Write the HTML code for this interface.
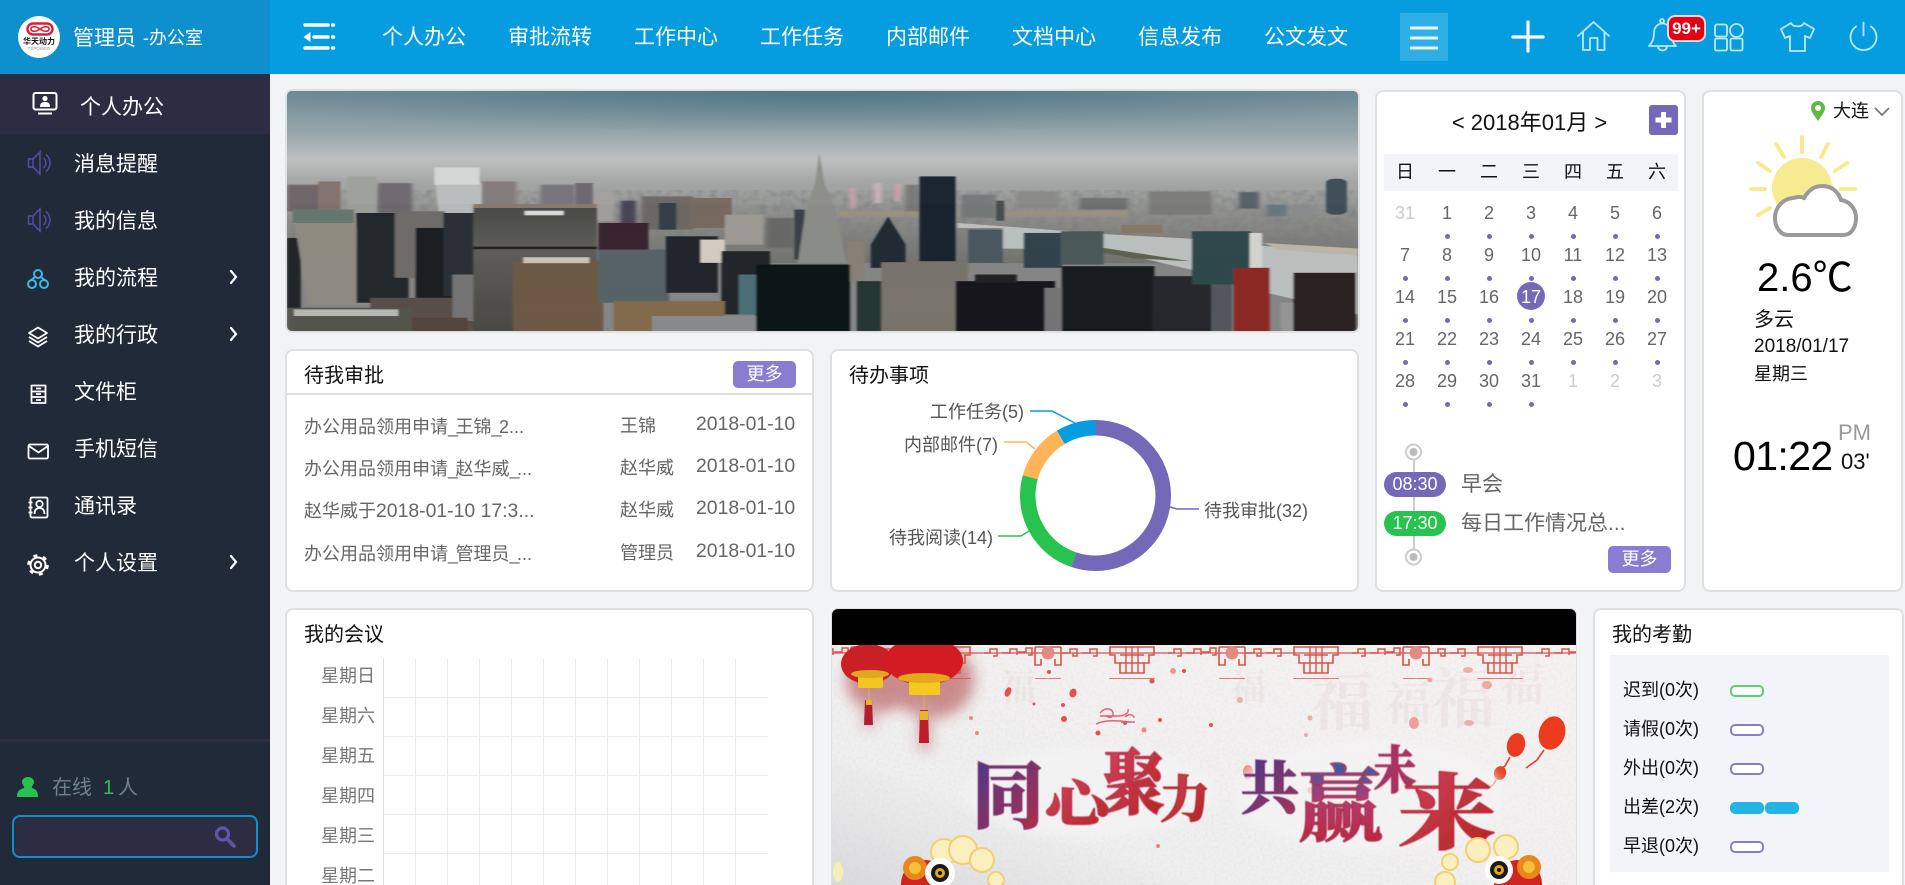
<!DOCTYPE html>
<html lang="zh-CN"><head><meta charset="utf-8"><title>OA</title>
<style>
*{box-sizing:border-box;margin:0;padding:0}
html,body{width:1905px;height:885px;overflow:hidden;background:#f2f3f5;font-family:"Liberation Sans","Noto Sans CJK SC",sans-serif}
#root{position:absolute;left:0;top:0;width:1905px;height:885px;overflow:hidden;background:#f2f3f5}
.a{position:absolute}
.t{position:absolute;white-space:nowrap;line-height:1}
.card{position:absolute;background:#fff;border:2px solid #dedfe1;border-radius:8px}
.w{color:#fff}
.n{letter-spacing:-2.5px}
.more{position:absolute;width:63px;height:27px;background:#8a7dd1;border-radius:5px;color:#fff;font-size:18px;line-height:27px;text-align:center}
.grid{position:absolute;left:1384px;display:grid;grid-template-columns:repeat(7,42px)}
.cal{top:191px;grid-auto-rows:42px;color:#666;font-size:18px;text-align:center;line-height:44px}
.cal span{position:relative;display:block}
.cal .m{color:#ccc}
.cal .d::after{content:"";position:absolute;left:18.5px;top:42.5px;width:5px;height:5px;border-radius:50%;background:#7468b8}
.cal .c{color:#fff}
.cal .c::before{content:"";position:absolute;left:7px;top:7px;width:28px;height:28px;border-radius:50%;background:#7468b8;z-index:-1}
.wk{top:154px;height:37px;background:#f3f3fa;line-height:37px;font-size:18px;text-align:center;color:#111;width:294px}
.pill{position:absolute;left:1384px;width:62px;height:25px;border-radius:13px;color:#fff;font-size:18px;line-height:25px;text-align:center}
.bar{position:absolute;width:34px;height:12px;border-radius:5px;border:2px solid #8a7dc8;background:#fff}
.l{position:absolute;left:1623px;font-size:18px;line-height:1;color:#111;white-space:nowrap}
.r{font-size:18px;color:#666}
.u{font-size:18px;color:#666}
.dt{font-size:19.4px;color:#666}
</style></head><body>
<div id="root">

<div class="a" style="left:0;top:0;width:270px;height:74px;background:#0e90cf"></div>
<div class="a" style="left:270px;top:0;width:1635px;height:74px;background:#069de0"></div>
<div class="a" style="left:0;top:74px;width:270px;height:811px;background:#202a38"></div>
<div class="a" style="left:0;top:74px;width:270px;height:60px;background:#2c2d42"></div>
<div class="a" style="left:0;top:739px;width:270px;height:3px;background:#2c2d42"></div>
<div class="a" style="left:12px;top:815px;width:246px;height:43px;background:#2c2d42;border:2px solid #0e90cf;border-radius:8px"></div>
<div class="a" style="left:1400px;top:13px;width:48px;height:48px;background:#30aee6"></div>

<!-- banner -->
<div class="a" style="left:285px;top:89px;width:1075px;height:244px;border:2px solid #dfe1e3;border-radius:7px;overflow:hidden;background:#888">
<svg width="1071" height="240" viewBox="10 18 1541 722" preserveAspectRatio="none" style="display:block">
<defs>
<linearGradient id="sky" x1="0" y1="0" x2="0" y2="1"><stop offset="0" stop-color="#748d99"/><stop offset=".55" stop-color="#93a3a9"/><stop offset="1" stop-color="#bfc3c3"/></linearGradient>
<radialGradient id="sk2" cx=".5" cy="0" r=".6"><stop offset="0" stop-color="#3f6a7c" stop-opacity=".65"/><stop offset="1" stop-color="#3f6a7c" stop-opacity="0"/></radialGradient>
<linearGradient id="cty" x1="0" y1="0" x2="0" y2="1"><stop offset="0" stop-color="#bcbfbf"/><stop offset=".2" stop-color="#a5a8a6"/><stop offset=".6" stop-color="#8e8f8b"/><stop offset="1" stop-color="#74756f"/></linearGradient>
<filter id="nz" x="0" y="0" width="100%" height="100%"><feTurbulence type="fractalNoise" baseFrequency=".1 .05" numOctaves="3" seed="4"/><feColorMatrix values="0 0 0 0 .2 0 0 0 0 .2 0 0 0 0 .22 0 0 0 1.3 -.5"/><feGaussianBlur stdDeviation="1.6 1"/></filter>
<filter id="bl"><feGaussianBlur stdDeviation="1.4 .6"/></filter>
<filter id="bl2"><feGaussianBlur stdDeviation="3 1.5"/></filter>
<linearGradient id="stripe" x1="0" y1="0" x2="0" y2="1"><stop offset="0" stop-color="#4a4a48"/><stop offset=".35" stop-color="#61605a"/><stop offset="1" stop-color="#4b4a46"/></linearGradient>
<pattern id="win" width="9" height="6" patternUnits="userSpaceOnUse"><rect width="9" height="2.500" fill="#000"/></pattern>
<linearGradient id="fade" x1="0" y1="0" x2="0" y2="1"><stop offset="0" stop-color="#000" stop-opacity="0"/><stop offset="1" stop-color="#000" stop-opacity="1"/></linearGradient>
<mask id="nm"><rect x="10" y="226" width="1541" height="90" fill="url(#fade)"/><rect x="10" y="316" width="1541" height="230" fill="#fff"/></mask>
</defs>
<rect x="10" y="18" width="1541" height="212" fill="url(#sky)"/>
<rect x="10" y="18" width="1541" height="212" fill="url(#sk2)"/>
<rect x="10" y="226" width="1541" height="310" fill="url(#cty)"/>
<g mask="url(#nm)"><rect x="10" y="236" width="1541" height="300" filter="url(#nz)"/></g>
<g filter="url(#bl2)">
<rect x="800" y="378" width="420" height="18" fill="#9c9484"/>
<rect x="1380" y="322" width="28" height="50" fill="#59636a"/><rect x="1420" y="360" width="28" height="35" fill="#6b7a82"/><rect x="1455" y="360" width="30" height="40" fill="#8c8e90"/>
<rect x="855" y="295" width="10" height="60" fill="#c8b4bc"/><rect x="885" y="295" width="8" height="55" fill="#c8a4ac"/><rect x="820" y="310" width="8" height="60" fill="#c8a4ac"/>
<rect x="10" y="300" width="50" height="80" fill="#6e6668"/>
<rect x="140" y="295" width="50" height="90" fill="#6e6a70"/>
<rect x="290" y="290" width="50" height="70" fill="#847c7c"/>
<rect x="375" y="300" width="50" height="60" fill="#77767a"/>
<rect x="450" y="320" width="30" height="90" fill="#a4a2a0"/>
<rect x="490" y="348" width="22" height="70" fill="#4a4652"/>
<rect x="520" y="335" width="75" height="100" fill="#6e6a68"/>
<rect x="700" y="400" width="40" height="90" fill="#6a6a68"/>
<rect x="900" y="300" width="20" height="80" fill="#7a7a78"/><rect x="980" y="330" width="50" height="70" fill="#777a7a"/><rect x="1060" y="320" width="60" height="50" fill="#8a8a88"/><rect x="1150" y="340" width="70" height="35" fill="#6f7272"/><rect x="1250" y="320" width="90" height="70" fill="#7d7d7b"/>
</g>
<g filter="url(#bl)">
<polygon points="975,415 1060,428 1200,450 1310,462 1551,512 1551,690 1420,625 1310,555 1185,495 1040,492 1040,430 975,430" fill="#bfc4c2"/>
<polygon points="1185,490 1310,530 1230,522 1185,505" fill="#5f6450"/>
<polygon points="1415,475 1551,492 1551,512 1440,497" fill="#c0b8aa"/>
<rect x="1030" y="348" width="12" height="60" fill="#4a4f50"/>
<rect x="1210" y="420" width="60" height="25" fill="#8a7a6a"/>
<rect x="97" y="275" width="42" height="110" fill="#9ea19c"/>
<polygon points="222,248 278,248 290,300 290,385 228,385" fill="#b9bdbd"/>
<rect x="222" y="248" width="65" height="52" fill="#d4d6d5"/>
<rect x="55" y="290" width="32" height="90" fill="#84736e"/>
<rect x="425" y="295" width="25" height="70" fill="#6f6a70"/>
<rect x="10" y="460" width="20" height="280" fill="#22262a"/>
<polygon points="18,375 105,375 130,660 40,660" fill="#918e84"/>
<rect x="18" y="375" width="88" height="40" fill="#667a70"/>
<rect x="110" y="385" width="75" height="270" fill="#24292e"/>
<rect x="165" y="380" width="72" height="200" fill="#716e6b"/>
<rect x="195" y="430" width="60" height="260" fill="#1c2024"/>
<rect x="235" y="385" width="45" height="250" fill="#2b3138"/>
<rect x="130" y="640" width="150" height="100" fill="#5a5148"/>
<rect x="248" y="570" width="35" height="140" fill="#777"/>
<rect x="278" y="360" width="178" height="380" fill="url(#stripe)"/>
<rect x="278" y="486" width="178" height="8" fill="#26251f"/>
<rect x="278" y="358" width="178" height="12" fill="#8a7d70"/>
<rect x="352" y="378" width="56" height="14" fill="#ddd"/>
<rect x="335" y="530" width="130" height="210" fill="#6f5b46"/>
<rect x="350" y="518" width="95" height="18" fill="#cfc6bc"/>
<rect x="458" y="415" width="72" height="85" fill="#3a2530"/>
<rect x="458" y="495" width="102" height="160" fill="#59656a"/>
<rect x="545" y="355" width="25" height="80" fill="#36404a"/>
<rect x="590" y="340" width="60" height="90" fill="#786c62"/>
<rect x="555" y="455" width="75" height="170" fill="#22282e"/>
<rect x="605" y="465" width="35" height="70" fill="#d8d0c4"/>
<rect x="640" y="390" width="55" height="90" fill="#a09d97"/>
<rect x="635" y="500" width="70" height="190" fill="#22272c"/>
<rect x="660" y="570" width="30" height="120" fill="#50707a"/>
<rect x="480" y="650" width="160" height="90" fill="#856d4f"/>
<rect x="10" y="670" width="180" height="70" fill="#55564f"/>
<rect x="20" y="675" width="150" height="20" fill="#bdbcb6"/>
<rect x="190" y="700" width="80" height="40" fill="#55473f"/>
<rect x="535" y="695" width="200" height="45" fill="#8c8d8e"/>
<rect x="740" y="375" width="15" height="150" fill="#3c424a"/>
<polygon points="776,205 783,295 800,380 815,535 745,535 756,380 770,295" fill="#8e8f8a"/>
<rect x="815" y="470" width="26" height="120" fill="#8a8378"/>
<polygon points="875,395 900,480 900,550 850,550 850,480" fill="#232b35"/>
<rect x="920" y="275" width="52" height="255" fill="#1a2530"/>
<rect x="990" y="435" width="50" height="100" fill="#4b5a60"/>
<rect x="1070" y="445" width="55" height="105" fill="#33454d"/>
<rect x="1123" y="440" width="62" height="100" fill="#4c5a5a"/>
<rect x="685" y="540" width="135" height="200" fill="#111418"/>
<rect x="830" y="590" width="36" height="150" fill="#263733"/>
<rect x="865" y="533" width="125" height="207" fill="#7b776f"/>
<rect x="972" y="590" width="143" height="150" fill="#17191c"/>
<rect x="1000" y="570" width="60" height="25" fill="#222"/>
<rect x="1100" y="610" width="25" height="130" fill="#777"/>
<rect x="1125" y="545" width="133" height="195" fill="#1a1c20"/>
<rect x="1255" y="575" width="85" height="165" fill="#27292d"/>
<rect x="1312" y="440" width="85" height="160" fill="#2f4a4e"/>
<rect x="1395" y="445" width="18" height="110" fill="#d8d8d2"/>
<rect x="1372" y="550" width="52" height="190" fill="#8e2a26"/>
<rect x="1340" y="600" width="30" height="140" fill="#555a60"/>
<rect x="1440" y="655" width="22" height="85" fill="#999"/>
<rect x="1458" y="565" width="90" height="175" fill="#2c2224"/>
<rect x="1505" y="282" width="30" height="108" rx="12" fill="#3f4f59"/>
<rect x="18" y="360" width="1530" height="380" fill="url(#win)" opacity=".06"/>
</g>
</svg></div>

<!-- cards -->
<div class="card" style="left:285px;top:349px;width:529px;height:243px"></div>
<div class="a" style="left:287px;top:393px;width:525px;height:2px;background:#dedfe1"></div>
<div class="card" style="left:830px;top:349px;width:529px;height:243px"></div>
<div class="card" style="left:1375px;top:90px;width:311px;height:502px"></div>
<div class="card" style="left:1702px;top:90px;width:201px;height:502px"></div>
<div class="card" style="left:285px;top:608px;width:529px;height:300px"></div>
<div class="card" style="left:1593px;top:608px;width:311px;height:300px"></div>
<div class="a" style="left:1610px;top:655px;width:279px;height:217px;background:#f3f3fa"></div>

<!-- poster -->
<div class="a" style="left:831px;top:608px;width:746px;height:300px;border:1px solid #dedfe1;border-radius:7px;overflow:hidden;background:#000">
<svg class="a" style="left:0;top:36px" width="744" height="262" viewBox="832 645 744 262">
<defs>
<linearGradient id="pbg" x1="0" y1="1" x2="1" y2="0"><stop offset="0" stop-color="#d6d7da"/><stop offset=".3" stop-color="#f0efef"/><stop offset="1" stop-color="#f6f3f2"/></linearGradient>
<filter id="tex" x="0" y="0" width="100%" height="100%"><feTurbulence type="fractalNoise" baseFrequency=".35" numOctaves="2" seed="7"/><feColorMatrix values="0 0 0 0 .55 0 0 0 0 .55 0 0 0 0 .58 0 0 0 .9 -.35"/></filter>
<filter id="b6"><feGaussianBlur stdDeviation="7"/></filter>
<filter id="b2"><feGaussianBlur stdDeviation="5"/></filter>
<filter id="b1"><feGaussianBlur stdDeviation=".5"/></filter>
<pattern id="lat" x="1018" y="645" width="184" height="32" patternUnits="userSpaceOnUse">
<path d="M0 8h184" stroke="#d9534a" stroke-width="1.200"/>
<path d="M0 7h8v-4h6v7h-4M44 8h8v-4h7v7h-4v-3M64 8h8v-4h7v7h-4M150 8h6v-4h7v7h-4M168 8h8v-4h7v6" fill="none" stroke="#d9534a" stroke-width="1.500"/>
<path d="M17 2h26M17 2v18h6v-6M43 2v18h-6v-6" fill="none" stroke="#d9534a" stroke-width="1.600"/>
<circle cx="30" cy="8" r="6.500" fill="#e38a82"/>
<path d="M92 2h44v8h-5v8h-5v10h-24v-10h-5v-8h-5z" fill="none" stroke="#d9534a" stroke-width="1.600"/>
<path d="M102 10h24M102 18h24M108 2v26M114 2v26M120 2v26" fill="none" stroke="#d9534a" stroke-width="1.400"/>
</pattern>
<linearGradient id="g1" x1="0" y1="0" x2="1" y2="1"><stop offset="0" stop-color="#423a90"/><stop offset="1" stop-color="#c02a3f"/></linearGradient>
<linearGradient id="g2" x1="0" y1="0" x2="1" y2="1"><stop offset="0" stop-color="#cf4360"/><stop offset="1" stop-color="#b2231c"/></linearGradient>
<linearGradient id="g3" x1="0" y1="0" x2="1" y2="1"><stop offset="0" stop-color="#3a3b8f"/><stop offset="1" stop-color="#c0304a"/></linearGradient>
<linearGradient id="g4" x1="0" y1="0" x2="0" y2="1"><stop offset="0" stop-color="#2b5fa8"/><stop offset=".45" stop-color="#b63a70"/><stop offset="1" stop-color="#bf2230"/></linearGradient>
</defs>
<rect x="832" y="645" width="744" height="262" fill="url(#pbg)"/>
<rect x="832" y="645" width="744" height="262" filter="url(#tex)" opacity=".4"/>
<g fill="#c89a9a" opacity=".1" font-family="'Liberation Serif','Noto Serif CJK SC',serif" font-weight="700">
<text x="1310" y="725" font-size="64">福</text><text x="1385" y="720" font-size="46">福</text><text x="1430" y="722" font-size="66">福</text><text x="1500" y="700" font-size="44">福</text><text x="1230" y="700" font-size="36">福</text><text x="1000" y="700" font-size="36">福</text>
</g>
<g filter="url(#b6)" opacity=".5"><ellipse cx="880" cy="680" rx="34" ry="32" fill="#a52b2b"/><ellipse cx="932" cy="680" rx="42" ry="38" fill="#a52b2b"/><rect x="919" y="705" width="12" height="45" fill="#a55"/><rect x="864" y="700" width="10" height="28" fill="#a55"/></g>
<rect x="832" y="645" width="744" height="34" fill="url(#lat)"/>
<line x1="869" y1="680" x2="869" y2="702" stroke="#d8b24a"/><line x1="924" y1="690" x2="924" y2="712" stroke="#d8b24a"/>
<ellipse cx="868" cy="664" rx="27" ry="20" fill="#c91f25"/><rect x="858" y="672" width="25" height="16" rx="2" fill="#f2c51f"/><ellipse cx="870" cy="674" rx="19" ry="4" fill="#e0a81e"/>
<ellipse cx="924" cy="661" rx="39" ry="24" fill="#d21c22"/><rect x="909" y="677" width="31" height="18" rx="2" fill="#f5c91f"/><ellipse cx="924" cy="678" rx="26" ry="5" fill="#e4a91b"/>
<path d="M865 700h7l1 25h-9z" fill="#b31d2e"/><path d="M920 710h8l1 33h-10z" fill="#bc1c2c"/><rect x="920" y="711" width="8" height="9" fill="#e6b62b"/><rect x="866" y="700" width="6" height="5" fill="#e6b62b"/>
<g fill="#e0524d">
<ellipse cx="1008" cy="692" rx="3" ry="5" transform="rotate(25 1008 692)"/><ellipse cx="1073" cy="693" rx="3.500" ry="4.500" transform="rotate(20 1073 693)"/><circle cx="1049" cy="672" r="2"/><circle cx="1063" cy="705" r="2"/><circle cx="1098" cy="733" r="2.500"/><circle cx="1125" cy="723" r="2"/><circle cx="1064" cy="719" r="3"/><circle cx="1034" cy="704" r="1.500"/><circle cx="1152" cy="681" r="2.500"/><circle cx="1173" cy="671" r="3" fill="#eb9a92"/><circle cx="1184" cy="671" r="2"/><circle cx="1211" cy="725" r="2"/><circle cx="1160" cy="720" r="2"/><circle cx="1144" cy="730" r="2.500" fill="#e88"/><circle cx="977" cy="733" r="2" fill="#e88"/><circle cx="971" cy="718" r="2" fill="#e88"/><circle cx="1310" cy="718" r="2.500" fill="#eaa"/><circle cx="1306" cy="735" r="2" fill="#eaa"/><circle cx="1240" cy="700" r="3" fill="#f0b0a8"/><circle cx="1430" cy="680" r="2.500" fill="#f0a0a0"/><ellipse cx="1468" cy="670" rx="5" ry="3" fill="#f0b0a8"/><ellipse cx="1487" cy="685" rx="5" ry="4" fill="#f0a8a0"/><ellipse cx="1414" cy="723" rx="5" ry="6" fill="#eda09a"/><ellipse cx="1469" cy="723" rx="5" ry="3" fill="#eeb0a8"/><ellipse cx="1248" cy="772" rx="5" ry="7" fill="#e88"/><circle cx="1158" cy="846" r="2" fill="#e88"/><circle cx="1310" cy="790" r="3" fill="#e88"/>
</g>
<g fill="none" stroke="#e2607a" stroke-width="1.400"><path d="M1100 713c5-6 12-5 13 0s-6 6-6 2M1100 716h18c7 0 11-3 10-7M1096 724c10-5 25-3 33-2"/><path d="M1125 717c4-4 9-2 9 1M1121 722h14"/></g>
<g transform="rotate(18 1552 733)"><ellipse cx="1552" cy="733" rx="13" ry="17" fill="#ec3a1e"/></g>
<g transform="rotate(15 1516 745)"><ellipse cx="1516" cy="745" rx="9" ry="12" fill="#ea3b20"/></g>
<ellipse cx="1500" cy="773" rx="6" ry="7" fill="#e54028" transform="rotate(18 1500 773)"/>
<path d="M1544 750l-7 10-11 8M1510 757l-5 9-8 6M1496 780l-3 5-6 4" fill="none" stroke="#e04028" stroke-width="1.600"/>
<g fill="#f5f4f4" filter="url(#b2)" opacity=".7"><ellipse cx="1090" cy="792" rx="125" ry="45"/><ellipse cx="1370" cy="795" rx="135" ry="55"/></g>
<g font-family="'Liberation Serif','Noto Serif CJK SC',serif" font-weight="900" stroke-width="1.200" filter="url(#b1)">
<text transform="translate(972 822) scale(1 1)" font-size="72" fill="url(#g1)" stroke="#7a2f6a">同</text>
<text transform="translate(1045 822) scale(1 .8)" font-size="64" fill="url(#g2)" stroke="#b8304a">心</text>
<text transform="translate(1103 808) scale(1 1.14)" font-size="62" fill="url(#g2)" stroke="#b8304a">聚</text>
<text transform="translate(1160 817) scale(1 1)" font-size="50" fill="url(#g2)" stroke="#b02828">力</text>
<text transform="translate(1241 808) scale(1 .98)" font-size="58" fill="url(#g3)" stroke="#6a2f70">共</text>
<text transform="translate(1298 834) scale(1 .98)" font-size="84" fill="url(#g4)" stroke="#a83050">赢</text>
<text transform="translate(1374 788) scale(1 1.2)" font-size="42" fill="#a83060" stroke="#a83060">未</text>
<text transform="translate(1398 842) scale(1 .84)" font-size="98" fill="url(#g2)" stroke="#b8283a">来</text>
</g>
<g><circle cx="944" cy="852" r="13" fill="#fbeebf" stroke="#f1cf73" stroke-width="2"/><circle cx="963" cy="850" r="14" fill="#fbeebf" stroke="#f1cf73" stroke-width="2"/><circle cx="982" cy="860" r="12" fill="#fbeebf" stroke="#f1cf73" stroke-width="2"/><circle cx="996" cy="880" r="8" fill="#fbeebf" stroke="#f1cf73" stroke-width="2"/></g>
<circle cx="925" cy="884" r="24" fill="#d0241f"/><circle cx="915" cy="868" r="12" fill="#e9861e"/><circle cx="915" cy="868" r="6" fill="#f3c23a"/><circle cx="940" cy="873" r="15" fill="#fff"/><circle cx="940" cy="873" r="9" fill="#1a1a1a"/><circle cx="940" cy="873" r="5" fill="#e5a51c"/><circle cx="940" cy="873" r="2" fill="#111"/>
<g><circle cx="1450" cy="862" r="8" fill="#fbeebf" stroke="#f1cf73" stroke-width="2"/><circle cx="1478" cy="850" r="12" fill="#fbeebf" stroke="#f1cf73" stroke-width="2"/><circle cx="1506" cy="847" r="12" fill="#fbeebf" stroke="#f1cf73" stroke-width="2"/><circle cx="1445" cy="882" r="10" fill="#fbeebf" stroke="#f1cf73" stroke-width="2"/></g>
<circle cx="1518" cy="884" r="24" fill="#d0241f"/><circle cx="1529" cy="867" r="12" fill="#e9861e"/><circle cx="1529" cy="867" r="6" fill="#f3c23a"/><circle cx="1499" cy="870" r="14" fill="#fff"/><circle cx="1499" cy="870" r="9" fill="#1a1a1a"/><circle cx="1499" cy="870" r="5" fill="#e5a51c"/><circle cx="1499" cy="870" r="2" fill="#111"/>
<ellipse cx="838" cy="872" rx="5" ry="10" fill="#f8ecb8"/>
</svg></div>

<!-- vector layer -->
<svg class="a" style="left:0;top:0" width="1905" height="885" viewBox="0 0 1905 885" fill="none">
<!-- logo -->
<ellipse cx="39" cy="37" rx="21" ry="21" fill="#fff"/>
<rect x="27.500" y="23.500" width="25" height="11" rx="5.500" stroke="#d81e3a" stroke-width="2.400" fill="#fff"/>
<path d="M31 29c0-3 5-3 9 0s9 3 9 0-5-3-9 0-9 3-9 0z" stroke="#d81e3a" stroke-width="1.600"/>
<text x="39" y="44" text-anchor="middle" font-size="8" font-weight="700" fill="#111" font-family="'Liberation Sans','Noto Sans CJK SC',sans-serif">华天动力</text>
<text x="39" y="50" text-anchor="middle" font-size="4.500" fill="#999" font-family="'Liberation Sans',sans-serif">TSPOWER</text>
<!-- header left icon -->
<g stroke="#fff" stroke-width="3.400" stroke-linecap="round"><path d="M305 25h23M314 37h14M305 48h23"/><path d="M332.500 25h1M332.500 37h1M332.500 48h1"/></g>
<path d="M303.500 37l7-5v10z" fill="#fff"/>
<!-- menu -->
<path d="M1410 28h28M1410 38h28M1410 48h28" stroke="#e9f6fc" stroke-width="3"/>
<path d="M1528 22v29M1513 37h30" stroke="#fff" stroke-width="3.200" stroke-linecap="round"/>
<g stroke="#bfe6f8" stroke-width="1.800" stroke-linejoin="round" stroke-linecap="round">
<path d="M1578 36l15.500-14 15.500 14M1583 32v18h7v-12h7.500v12h7v-18"/>
<path d="M1649 46c3-3 5-7 5-13 0-6 4-9.500 8.500-9.500s8.500 3.500 8.500 9.500c0 6 2 10 5 13zM1658 46c0 6 9 6 9 0"/>
<circle cx="1662" cy="21" r="2"/>
<rect x="1715" y="24.500" width="12" height="12" rx="2"/><rect x="1715" y="38.500" width="12" height="12" rx="1.500"/><rect x="1730.500" y="38.500" width="12" height="12" rx="1.500"/><circle cx="1736.500" cy="30.500" r="6.500"/>
<path d="M1791 23c2 4.500 11 4.500 13 0l10 6-4 9-5-2v15h-15v-15l-5 2-4-9z"/>
<path d="M1856 26.500a13 13 0 1 0 15 0M1863.500 22.500v13"/>
</g>
<!-- side icons -->
<g stroke="#fff" stroke-width="2">
<rect x="33.500" y="93" width="23" height="16.500" rx="2"/><path d="M38 113.500h14"/>
<circle cx="45" cy="98.500" r="2.600" fill="#fff" stroke="none"/><path d="M40 107c0-4 2-5 5-5s5 1 5 5z" fill="#fff" stroke="none"/>
</g>
<g stroke="#5a50a8" stroke-width="1.400">
<path d="M28.500 159h4.500l7-7v22l-7-7h-4.500zM33 159v8M43.500 158a6.500 6.500 0 0 1 0 10M46 154.500a11 11 0 0 1 0 17"/>
<path d="M28.500 216h4.500l7-7v22l-7-7h-4.500zM33 216v8M43.500 215a6.500 6.500 0 0 1 0 10M46 211.500a11 11 0 0 1 0 17"/>
</g>
<g stroke="#3db8e8" stroke-width="2"><circle cx="38" cy="274" r="4"/><circle cx="32" cy="284" r="4"/><circle cx="44" cy="284" r="4"/><path d="M35 277l-5 4M41 277l5 4"/></g>
<g stroke="#fff" stroke-width="1.800" stroke-linejoin="round">
<path d="M38 327.500l9 5.500-9 5.500-9-5.500z"/><path d="M29 337l9 5.500 9-5.500M29 341l9 5.500 9-5.500"/>
<rect x="31.500" y="385.500" width="14" height="17.500"/><path d="M31.500 391.500h14M31.500 397h14M36 388.500h5M36 394h5M36 400h5"/>
<rect x="28.500" y="444.500" width="19.500" height="14" rx="1.500"/><path d="M29 446l9.500 6.500 9.500-6.500"/>
<rect x="30.500" y="497.500" width="17" height="20" rx="1.500"/><circle cx="39.500" cy="504" r="3.200"/><path d="M34.500 514c0-4 2-6 5-6s5 2 5 6M28.500 502.500h4M28.500 507.500h4M28.500 512.500h4"/>
<circle cx="38" cy="565" r="7.500" stroke-width="2"/><circle cx="38" cy="565" r="9.500" stroke-width="2.600" stroke-dasharray="4 5.950"/><circle cx="38" cy="565" r="3.200" stroke-width="2"/>
</g>
<g stroke="#fff" stroke-width="2.200" stroke-linecap="round"><path d="M231 271l5 6-5 6M231 328l5 6-5 6M231 556l5 6-5 6"/></g>
<path d="M28 797c0-7 4-8 7-9 1-2-2-3-2-6 0-3 3-5 6-5s6 2 6 5c0 3-3 4-2 6 3 1 6 2 6 9z" fill="#28c24f" transform="translate(-11 0)"/>
<circle cx="222.500" cy="834" r="6" stroke="#5f55ad" stroke-width="3.200"/><path d="M227 839l7 7" stroke="#5f55ad" stroke-width="3.600" stroke-linecap="round"/>
<!-- calendar plus -->
<rect x="1649" y="105" width="29" height="30" rx="3" fill="#7468b8"/>
<path d="M1663.500 112v16M1655.500 120h16" stroke="#fff" stroke-width="5"/>
<!-- timeline -->
<path d="M1414 460v90" stroke="#ccc" stroke-width="2"/>
<circle cx="1413.500" cy="452" r="7.500" fill="#fff" stroke="#ccc" stroke-width="2"/><circle cx="1413.500" cy="452" r="4" fill="#bbb"/>
<circle cx="1413.500" cy="557" r="7.500" fill="#fff" stroke="#ccc" stroke-width="2"/><circle cx="1413.500" cy="557" r="4" fill="#bbb"/>
<!-- weather -->
<path d="M1818 121c-4-6-7-9-7-13a7 7 0 0 1 14 0c0 4-3 7-7 13z" fill="#5fb947"/><circle cx="1818" cy="108" r="3" fill="#fff"/>
<path d="M1875 108l7 7 7-7" stroke="#777" stroke-width="1.800"/>
<circle cx="1802" cy="188" r="30" fill="#f5ec91"/>
<g stroke="#f5ec91" stroke-width="4" stroke-linecap="round"><path d="M1802 137v15M1776 144l8 13M1828 144l-7 13M1758 163l12 8M1847 163l-12 8M1751 189h14M1841 189h14M1758 215l12-7"/></g>
<path d="M1788 235h55c10 0 13-10 13-17 0-10-7-17-15-18-3-9-10-14-19-14-8 0-14 5-18 12-4-2-6-1-11 0-11 1-18 10-18 20 0 10 6 17 13 17z" fill="#fff" stroke="#9a9a9a" stroke-width="4"/>
<!-- donut -->
<g transform="rotate(-90 1095.500 495.500)" stroke-width="15.500">
<circle cx="1095.500" cy="495.500" r="67.750" stroke="#7468b8" stroke-dasharray="234.900 425.700"/>
<circle cx="1095.500" cy="495.500" r="67.750" stroke="#28c24f" stroke-dasharray="102.800 425.700" stroke-dashoffset="-234.900"/>
<circle cx="1095.500" cy="495.500" r="67.750" stroke="#ffb557" stroke-dasharray="51.400 425.700" stroke-dashoffset="-337.700"/>
<circle cx="1095.500" cy="495.500" r="67.750" stroke="#069de0" stroke-dasharray="36.700 425.700" stroke-dashoffset="-389.100"/>
</g>
<g stroke-width="1.500"><path d="M1030 411h22l23 12" stroke="#069de0"/><path d="M1004 442h22l9 7" stroke="#ffb557"/><path d="M1170 507l7 2h22" stroke="#7468b8"/><path d="M998 536h23l8-5" stroke="#28c24f"/></g>
<g font-size="18" fill="#555" font-family="'Liberation Sans','Noto Sans CJK SC',sans-serif">
<text x="1024" y="418" text-anchor="end">工作任务(5)</text>
<text x="998" y="451" text-anchor="end">内部邮件(7)</text>
<text x="1204" y="517">待我审批(32)</text>
<text x="993" y="544" text-anchor="end">待我阅读(14)</text>
</g>
<!-- meetings grid -->
<g stroke="#e8ebee" stroke-width="1">
<path d="M415.500 658v227M447.500 658v227M479.500 658v227M511.500 658v227M543.500 658v227M575.500 658v227M607.500 658v227M639.500 658v227M671.500 658v227M703.500 658v227M735.500 658v227"/>
<path d="M384 697.500h384M384 736.500h384M384 775.500h384M384 814.500h384M384 853.500h384"/>
</g>
<path d="M383.500 658v227" stroke="#dcdfe2" stroke-width="1"/>
<g font-size="18" fill="#777" text-anchor="end" font-family="'Liberation Sans','Noto Sans CJK SC',sans-serif">
<text x="375" y="682">星期日</text><text x="375" y="722">星期六</text><text x="375" y="762">星期五</text><text x="375" y="802">星期四</text><text x="375" y="842">星期三</text><text x="375" y="882">星期二</text>
</g>
</svg>

<!-- header text -->
<div class="t w" style="left:73px;top:28px;font-size:21px">管理员</div>
<div class="t w" style="left:143px;top:29px;font-size:18px">-办公室</div>
<div class="t w" style="left:382px;top:27px;font-size:21px">个人办公</div>
<div class="t w" style="left:508px;top:27px;font-size:21px">审批流转</div>
<div class="t w" style="left:634px;top:27px;font-size:21px">工作中心</div>
<div class="t w" style="left:760px;top:27px;font-size:21px">工作任务</div>
<div class="t w" style="left:886px;top:27px;font-size:21px">内部邮件</div>
<div class="t w" style="left:1012px;top:27px;font-size:21px">文档中心</div>
<div class="t w" style="left:1138px;top:27px;font-size:21px">信息发布</div>
<div class="t w" style="left:1264px;top:27px;font-size:21px">公文发文</div>
<div class="a" style="left:1667px;top:15px;width:39px;height:27px;background:#e60012;border:2px solid #f6d3d6;border-radius:8px;color:#fff;font-weight:700;font-size:17px;line-height:23px;text-align:center;font-family:'Liberation Sans',sans-serif">99+</div>

<!-- side text -->
<div class="t w" style="left:80px;top:97px;font-size:21px">个人办公</div>
<div class="t w" style="left:74px;top:154px;font-size:21px">消息提醒</div>
<div class="t w" style="left:74px;top:211px;font-size:21px">我的信息</div>
<div class="t w" style="left:74px;top:268px;font-size:21px">我的流程</div>
<div class="t w" style="left:74px;top:325px;font-size:21px">我的行政</div>
<div class="t w" style="left:74px;top:382px;font-size:21px">文件柜</div>
<div class="t w" style="left:74px;top:439px;font-size:21px">手机短信</div>
<div class="t w" style="left:74px;top:496px;font-size:21px">通讯录</div>
<div class="t w" style="left:74px;top:553px;font-size:21px">个人设置</div>
<div class="t" style="left:52px;top:778px;font-size:20px;color:#6f8290">在线</div>
<div class="t" style="left:103px;top:778px;font-size:20px;color:#28c24f">1</div>
<div class="t" style="left:118px;top:778px;font-size:20px;color:#6f8290">人</div>

<!-- approval -->
<div class="t" style="left:304px;top:366px;font-size:20px;color:#111">待我审批</div>
<div class="more" style="left:733px;top:361px">更多</div>
<div class="t r" style="left:304px;top:418px">办公用品领用申请<span class="n">_</span>王锦<span class="n">_</span>2...</div>
<div class="t u" style="left:620px;top:417px">王锦</div>
<div class="t dt" style="left:696px;top:415px">2018-01-10</div>
<div class="t r" style="left:304px;top:460px">办公用品领用申请<span class="n">_</span>赵华威<span class="n">_</span>...</div>
<div class="t u" style="left:620px;top:459px">赵华威</div>
<div class="t dt" style="left:696px;top:457px">2018-01-10</div>
<div class="t r" style="left:304px;top:502px">赵华威于<span style="font-size:19.4px">2018-01-10 17:3...</span></div>
<div class="t u" style="left:620px;top:501px">赵华威</div>
<div class="t dt" style="left:696px;top:499px">2018-01-10</div>
<div class="t r" style="left:304px;top:545px">办公用品领用申请<span class="n">_</span>管理员<span class="n">_</span>...</div>
<div class="t u" style="left:620px;top:544px">管理员</div>
<div class="t dt" style="left:696px;top:542px">2018-01-10</div>

<div class="t" style="left:849px;top:366px;font-size:20px;color:#111">待办事项</div>

<!-- calendar -->
<div class="t" style="left:1430px;width:199px;text-align:center;top:112px;font-size:22px;color:#111">&lt; 2018年01月 &gt;</div>
<div class="grid wk"><span>日</span><span>一</span><span>二</span><span>三</span><span>四</span><span>五</span><span>六</span></div>
<div class="grid cal" style="z-index:0">
<span class="m">31</span><span class="d">1</span><span class="d">2</span><span class="d">3</span><span class="d">4</span><span class="d">5</span><span class="d">6</span>
<span class="d">7</span><span class="d">8</span><span class="d">9</span><span class="d">10</span><span class="d">11</span><span class="d">12</span><span class="d">13</span>
<span class="d">14</span><span class="d">15</span><span class="d">16</span><span class="d c">17</span><span class="d">18</span><span class="d">19</span><span class="d">20</span>
<span class="d">21</span><span class="d">22</span><span class="d">23</span><span class="d">24</span><span class="d">25</span><span class="d">26</span><span class="d">27</span>
<span class="d">28</span><span class="d">29</span><span class="d">30</span><span class="d">31</span><span class="m">1</span><span class="m">2</span><span class="m">3</span>
</div>
<div class="pill" style="top:472px;background:#7468b8">08:30</div>
<div class="pill" style="top:511px;background:#28c24f">17:30</div>
<div class="t" style="left:1461px;top:474px;font-size:21px;color:#666">早会</div>
<div class="t" style="left:1461px;top:513px;font-size:21px;color:#666">每日工作情况总...</div>
<div class="more" style="left:1608px;top:546px">更多</div>

<!-- weather -->
<div class="t" style="left:1833px;top:102px;font-size:18px;color:#111">大连</div>
<div class="t" style="left:1757px;top:258px;font-size:40px;color:#000">2.6℃</div>
<div class="t" style="left:1754px;top:310px;font-size:20px;color:#111">多云</div>
<div class="t" style="left:1754px;top:337px;font-size:19px;color:#111">2018/01/17</div>
<div class="t" style="left:1754px;top:365px;font-size:18px;color:#111">星期三</div>
<div class="t" style="left:1733px;top:436px;font-size:41px;color:#000;letter-spacing:-.6px">01:22</div>
<div class="t" style="left:1838px;top:422px;font-size:22px;color:#999">PM</div>
<div class="t" style="left:1841px;top:451px;font-size:22px;color:#111">03'</div>

<!-- titles -->
<div class="t" style="left:304px;top:625px;font-size:20px;color:#111">我的会议</div>
<div class="t" style="left:1612px;top:625px;font-size:20px;color:#111">我的考勤</div>
<div class="l" style="top:681px">迟到(0次)</div><div class="bar" style="left:1730px;top:685px;border-color:#5ad06f"></div>
<div class="l" style="top:720px">请假(0次)</div><div class="bar" style="left:1730px;top:724px"></div>
<div class="l" style="top:759px">外出(0次)</div><div class="bar" style="left:1730px;top:763px"></div>
<div class="l" style="top:798px">出差(2次)</div><div class="bar" style="left:1730px;top:802px;background:#22b5e6;border-color:#22b5e6"></div><div class="bar" style="left:1765px;top:802px;background:#22b5e6;border-color:#22b5e6"></div>
<div class="l" style="top:837px">早退(0次)</div><div class="bar" style="left:1730px;top:841px"></div>
</div>
</body></html>
